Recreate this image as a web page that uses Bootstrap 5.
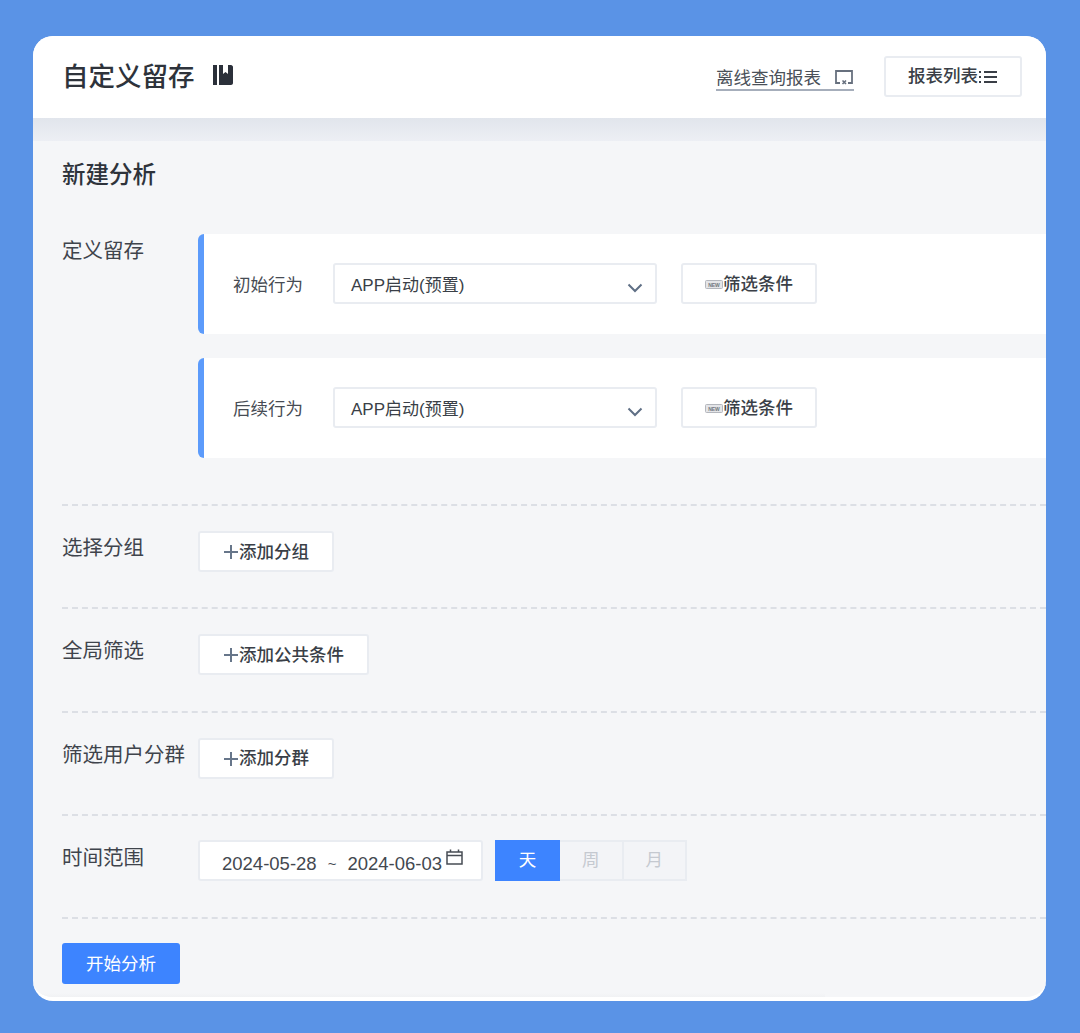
<!DOCTYPE html>
<html lang="zh-CN">
<head>
  <meta charset="UTF-8">
  <meta name="viewport" content="width=device-width, initial-scale=1.0">
  <title>自定义留存</title>
  <link rel="stylesheet" href="https://cdn.jsdelivr.net/npm/bootstrap@5.3.2/dist/css/bootstrap.min.css">
  <style>
    body { background: #5a93e6; font-family: "Liberation Sans", "Noto Sans CJK SC", sans-serif; color: #33383f; padding: 36px 34px 32px 33px; height: 1033px; overflow: hidden; }
    .panel { background: #f5f6f8; border-radius: 20px; overflow: hidden; height: 965px; border-bottom: 4px solid #fff; }
    .top-bar { height: 82px; background: #fff; padding: 0 24px 0 29px; }
    .page-title { font-size: 26.500px; font-weight: 500; color: #2e333b; margin: 0 17px 0 0; line-height: 1; }
    .offline-link { font-size: 17.500px; color: #4a5058; border-bottom: 2px solid #a6aebb; height: 26px; line-height: 26px; margin-right: 30px; width: 138px; margin-top: 2px; text-decoration: none; }
    .shade { height: 23px; background: linear-gradient(#e1e5ec, #edeff4); }
    .main-area { padding: 0 0 0 29px; height: 854px; }
    .sec-title { font-size: 23.500px; font-weight: 500; color: #2e333b; margin: 0; padding-top: 20px; height: 93px; line-height: 28px; }
    .field-label { width: 136px; font-size: 20.500px; line-height: 28px; color: #3f444c; flex-shrink: 0; white-space: nowrap; padding-top: 3px; }
    .event-box { height: 100px; background: #fff; border-left: 6px solid #5c9bfb; border-radius: 6px 0 0 6px; padding: 0 0 0 29px; margin-bottom: 24px; }
    .event-name { font-size: 17.500px; color: #474c54; width: 100px; padding-top: 2px; }
    .fake-select { width: 324px; height: 41px; background: #fff; border: 2px solid #e9ecf1; border-radius: 3px; padding: 4px 12px 0 16px; font-size: 17px; color: #3a3f47; margin-right: 24px; margin-bottom: 1px; }
    .plain-btn { height: 41px; background: #fff; border: 2px solid #e9ecf1; border-radius: 3px; font-size: 17.500px; font-weight: 500; color: #3a3f47; padding: 1px 0 0; white-space: nowrap; }
    .plain-btn:hover { background: #fff; border-color: #e9ecf1; color: #3a3f47; }
    .filter-btn { width: 136px; margin-bottom: 1px; }
    .list-btn { width: 138px; margin-bottom: 2px; }
    .add-btn { padding-left: 23px; padding-right: 23px; }
    .group-row { height: 103.250px; padding-top: 25px; border-top: 2px dashed #dcdfe5; }
    .row-first { height: 22px; }
    .time-row { padding-top: 24px; }
    .time-row .field-label { padding-top: 4px; }
    .date-box { width: 285px; height: 41px; background: #fff; border: 2px solid #e9ecf1; border-radius: 3px; font-size: 18.500px; color: #43484f; padding: 7px 0 0 22px; margin-right: 12px; white-space: nowrap; }
    .date-box svg { margin: -13px 0 0 4px; }
    .tilde { margin: 0 11px; font-size: 15px; }
    .unit-btn { width: 63.500px; height: 41px; background: #f3f4f7; border: 2px solid #e9ecf1; border-left-width: 0; font-size: 17.500px; color: #c5c9d0; padding: 0; border-radius: 0; }
    .unit-on { width: 65px; background: #3d84ff; border: 0; color: #fff; }
    .start-btn { width: 118px; height: 41px; background: #3d84ff; border: 0; border-radius: 3px; font-size: 17.500px; color: #fff; padding: 2px 0 0; }
    .last-row { border-top: 2px dashed #dcdfe5; padding-top: 24px; }
    .foot-shade { height: 6px; margin-top: 9px; width: 792px; margin-left: -29px; background: linear-gradient(#f5f6f8, #eff0f2); }
  </style>
</head>
<body>
  <div class="panel">
    <div class="top-bar d-flex align-items-center">
      <h1 class="page-title">自定义留存</h1>
      <svg width="22" height="24" viewBox="0 0 22 24" class="mb-1"><path fill="#2b303a" d="M1 2h4v20H1zM7 2h4v9l2.500-2 2.500 2V2h3c1 0 2 1 2 2v16c0 1-1 2-2 2H7z"/></svg>
      <div class="ms-auto d-flex align-items-center">
        <a class="offline-link d-flex" href="#">离线查询报表
          <svg class="ms-auto mt-1" width="20" height="18" viewBox="0 0 20 18"><path fill="none" stroke="#67707e" stroke-width="1.800" d="M6 14H2V2h16v12h-4"/><path fill="none" stroke="#67707e" stroke-width="1.600" d="M8.500 11.500l3.500 3.500M12 11.500L8.500 15"/></svg>
        </a>
        <button class="btn plain-btn list-btn d-flex align-items-center justify-content-center" type="button">报表列表
          <svg width="20" height="14" viewBox="0 0 20 14"><path fill="none" stroke="#3a3f47" stroke-width="2.200" d="M1 2h2M1 7h2M1 12h2M6 2h13M6 7h13M6 12h13"/></svg>
        </button>
      </div>
    </div>
    <div class="shade"></div>
    <div class="main-area">
      <h2 class="sec-title">新建分析</h2>

      <div class="d-flex">
        <div class="field-label">定义留存</div>
        <div class="flex-grow-1">
          <div class="event-box d-flex align-items-center">
            <div class="event-name">初始行为</div>
            <div class="fake-select d-flex align-items-center">APP启动(预置)
              <svg class="ms-auto mt-1" width="16" height="10" viewBox="0 0 16 10"><path fill="none" stroke="#5f6f85" stroke-width="2" d="M1.500 1.500L8 8l6.500-6.500"/></svg>
            </div>
            <button class="btn plain-btn filter-btn d-flex align-items-center justify-content-center" type="button">
              <svg width="18" height="9" viewBox="0 0 18 9"><rect x=".5" y=".5" width="17" height="8" rx="1" fill="#e4e5e8" stroke="#b4b7bd"/><text x="9" y="6.500" font-size="5" font-weight="700" text-anchor="middle" fill="#70757d">NEW</text></svg>筛选条件
            </button>
          </div>
          <div class="event-box d-flex align-items-center">
            <div class="event-name">后续行为</div>
            <div class="fake-select d-flex align-items-center">APP启动(预置)
              <svg class="ms-auto mt-1" width="16" height="10" viewBox="0 0 16 10"><path fill="none" stroke="#5f6f85" stroke-width="2" d="M1.500 1.500L8 8l6.500-6.500"/></svg>
            </div>
            <button class="btn plain-btn filter-btn d-flex align-items-center justify-content-center" type="button">
              <svg width="18" height="9" viewBox="0 0 18 9"><rect x=".5" y=".5" width="17" height="8" rx="1" fill="#e4e5e8" stroke="#b4b7bd"/><text x="9" y="6.500" font-size="5" font-weight="700" text-anchor="middle" fill="#70757d">NEW</text></svg>筛选条件
            </button>
          </div>
        </div>
      </div>
      <div class="row-first"></div>

      <div class="group-row d-flex">
        <div class="field-label">选择分组</div>
        <button class="btn plain-btn add-btn d-flex align-items-center justify-content-center" type="button">
          <svg width="16" height="16" viewBox="0 0 16 16"><path fill="none" stroke="#67768a" stroke-width="2" d="M8 1v14M1 8h14"/></svg>添加分组
        </button>
      </div>
      <div class="group-row d-flex">
        <div class="field-label">全局筛选</div>
        <button class="btn plain-btn add-btn d-flex align-items-center justify-content-center" type="button">
          <svg width="16" height="16" viewBox="0 0 16 16"><path fill="none" stroke="#67768a" stroke-width="2" d="M8 1v14M1 8h14"/></svg>添加公共条件
        </button>
      </div>
      <div class="group-row d-flex">
        <div class="field-label">筛选用户分群</div>
        <button class="btn plain-btn add-btn d-flex align-items-center justify-content-center" type="button">
          <svg width="16" height="16" viewBox="0 0 16 16"><path fill="none" stroke="#67768a" stroke-width="2" d="M8 1v14M1 8h14"/></svg>添加分群
        </button>
      </div>
      <div class="group-row time-row d-flex">
        <div class="field-label">时间范围</div>
        <div class="date-box d-flex align-items-center">2024-05-28<span class="tilde">~</span>2024-06-03
          <svg width="17" height="16" viewBox="0 0 17 16"><path fill="none" stroke="#474c54" stroke-width="1.500" d="M1 3h15v12H1zM1 6.500h15M4.500 .5v3M12.500 .5v3"/></svg>
        </div>
        <button class="btn unit-btn unit-on" type="button">天</button>
        <button class="btn unit-btn" type="button">周</button>
        <button class="btn unit-btn" type="button">月</button>
      </div>
      <div class="last-row">
        <button class="btn start-btn" type="button">开始分析</button>
        <div class="foot-shade"></div>
      </div>
    </div>
  </div>
  <script src="https://cdn.jsdelivr.net/npm/bootstrap@5.3.2/dist/js/bootstrap.bundle.min.js"></script>
</body>
</html>
